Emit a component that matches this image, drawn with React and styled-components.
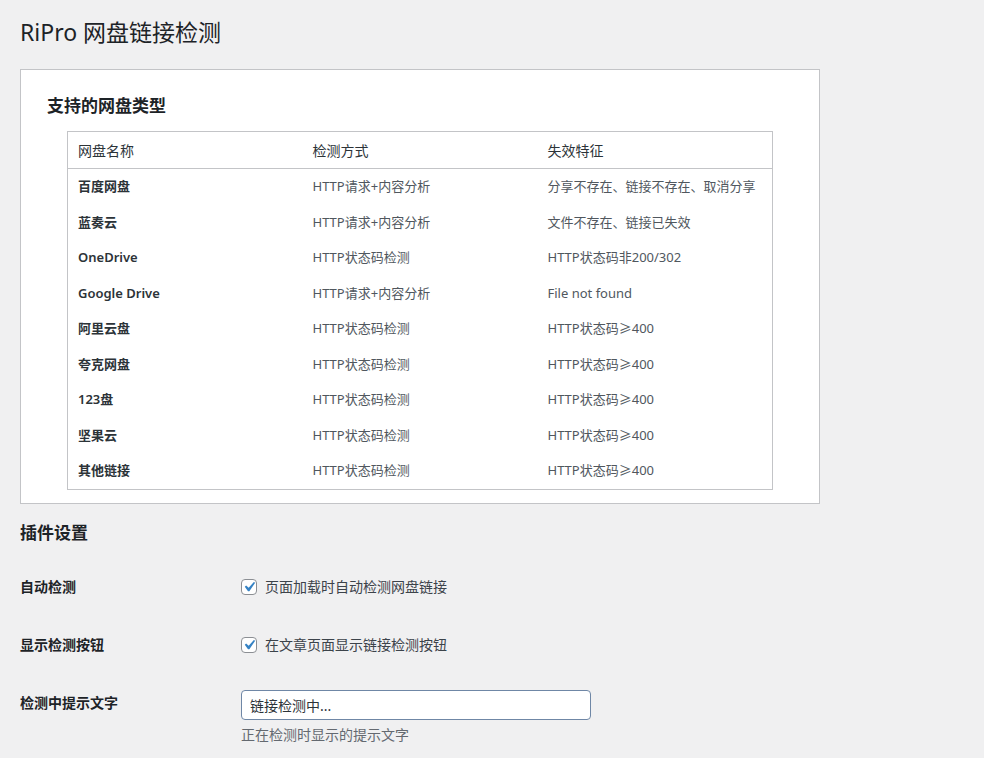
import React from 'react';
import styled, { createGlobalStyle } from 'styled-components';

const GlobalStyle = createGlobalStyle`
    body {
        margin: 0;
        background: #f0f0f1;
        color: #3c434a;
        font-family: "Noto Sans", "Noto Sans CJK SC", sans-serif;
        font-size: 13px;
    }
`;

const Wrap = styled.div`
    padding: 0 20px;
`;

const PageTitle = styled.h1`
    margin: 0;
    padding-top: 17px;
    font-size: 23px;
    line-height: 30px;
    font-weight: 400;
    color: #1d2327;
`;

const Card = styled.div`
    width: 800px;
    box-sizing: border-box;
    margin-top: 22px;
    background: #fff;
    border: 1px solid #c3c4c7;
    padding: 25px 26px 13px 26px;
`;

const SectionTitle = styled.h2`
    margin: ${p => (p.$outside ? '18px 0 14px 0' : '0 0 14px 0')};
    font-size: 17px;
    line-height: 22px;
    font-weight: 600;
    color: #1d2327;
`;

const Table = styled.table`
    width: 706px;
    margin-left: 20px;
    border-collapse: collapse;
    border: 1px solid #c3c4c7;
    table-layout: fixed;
`;

const Th = styled.th`
    text-align: left;
    font-weight: 400;
    font-size: 14px;
    color: #2c3338;
    padding: 8px 10px;
    height: 20px;
    border-bottom: 1px solid #c3c4c7;
`;

const Td = styled.td`
    padding: 8px 10px;
    height: 19.5px;
    font-size: 13px;
    line-height: 19.5px;
    color: ${p => (p.$name ? '#2c3338' : '#50575e')};
    font-weight: ${p => (p.$name ? 600 : 400)};
    white-space: nowrap;
`;

const FormRow = styled.div`
    display: grid;
    grid-template-columns: 221px 1fr;
    align-items: start;
`;

const Label = styled.div`
    padding: 20px 0;
    font-size: 14px;
    line-height: 18px;
    font-weight: 600;
    color: #1d2327;
`;

const Field = styled.div`
    padding: ${p => (p.$input ? '16px 0' : '20px 0')};
`;

const CheckLine = styled.label`
    display: flex;
    align-items: center;
    gap: 8px;
    font-size: 14px;
    line-height: 18px;
    color: #3c434a;
`;

const Box = styled.span`
    width: 16px;
    height: 16px;
    box-sizing: border-box;
    border: 1px solid #8c8f94;
    border-radius: 4px;
    background: #fff;
    display: inline-flex;
    align-items: center;
    justify-content: center;
    overflow: visible;

    svg {
        flex: none;
        margin: -3px;
    }
`;

const TextInput = styled.input`
    width: 350px;
    height: 30px;
    box-sizing: border-box;
    border: 1px solid #6f87a6;
    border-radius: 4px;
    padding: 0 8px;
    font-family: inherit;
    font-size: 14px;
    color: #2c3338;
    background: #fff;
    outline: none;
`;

const Description = styled.p`
    margin: 5px 0 0 0;
    font-size: 14px;
    line-height: 20px;
    color: #646970;
`;

const rows = [
    ['百度网盘', 'HTTP请求+内容分析', '分享不存在、链接不存在、取消分享'],
    ['蓝奏云', 'HTTP请求+内容分析', '文件不存在、链接已失效'],
    ['OneDrive', 'HTTP状态码检测', 'HTTP状态码非200/302'],
    ['Google Drive', 'HTTP请求+内容分析', 'File not found'],
    ['阿里云盘', 'HTTP状态码检测', 'HTTP状态码≥400'],
    ['夸克网盘', 'HTTP状态码检测', 'HTTP状态码≥400'],
    ['123盘', 'HTTP状态码检测', 'HTTP状态码≥400'],
    ['坚果云', 'HTTP状态码检测', 'HTTP状态码≥400'],
    ['其他链接', 'HTTP状态码检测', 'HTTP状态码≥400'],
];

// WordPress style checkmark
const Check = () => (
    <Box>
        <svg width="20" height="20" viewBox="0 0 20 20">
            <path d="M14.83 4.89l1.34.94-5.81 8.38H9.02L5.78 9.67l1.34-1.25 2.57 2.4z" fill="#3582c4" />
        </svg>
    </Box>
);

const App = () => {
    return (
        <Wrap>
            <GlobalStyle />
            <PageTitle>RiPro 网盘链接检测</PageTitle>
            <Card>
                <SectionTitle>支持的网盘类型</SectionTitle>
                <Table>
                    <thead>
                        <tr>
                            <Th>网盘名称</Th>
                            <Th>检测方式</Th>
                            <Th>失效特征</Th>
                        </tr>
                    </thead>
                    <tbody>
                        {rows.map(r => (
                            <tr key={r[0]}>
                                <Td $name>{r[0]}</Td>
                                <Td>{r[1]}</Td>
                                <Td>{r[2]}</Td>
                            </tr>
                        ))}
                    </tbody>
                </Table>
            </Card>
            <SectionTitle $outside>插件设置</SectionTitle>
            <FormRow>
                <Label>自动检测</Label>
                <Field>
                    <CheckLine><Check />页面加载时自动检测网盘链接</CheckLine>
                </Field>
            </FormRow>
            <FormRow>
                <Label>显示检测按钮</Label>
                <Field>
                    <CheckLine><Check />在文章页面显示链接检测按钮</CheckLine>
                </Field>
            </FormRow>
            <FormRow>
                <Label>检测中提示文字</Label>
                <Field $input>
                    <TextInput defaultValue="链接检测中..." />
                    <Description>正在检测时显示的提示文字</Description>
                </Field>
            </FormRow>
        </Wrap>
    );
};

export default App;
